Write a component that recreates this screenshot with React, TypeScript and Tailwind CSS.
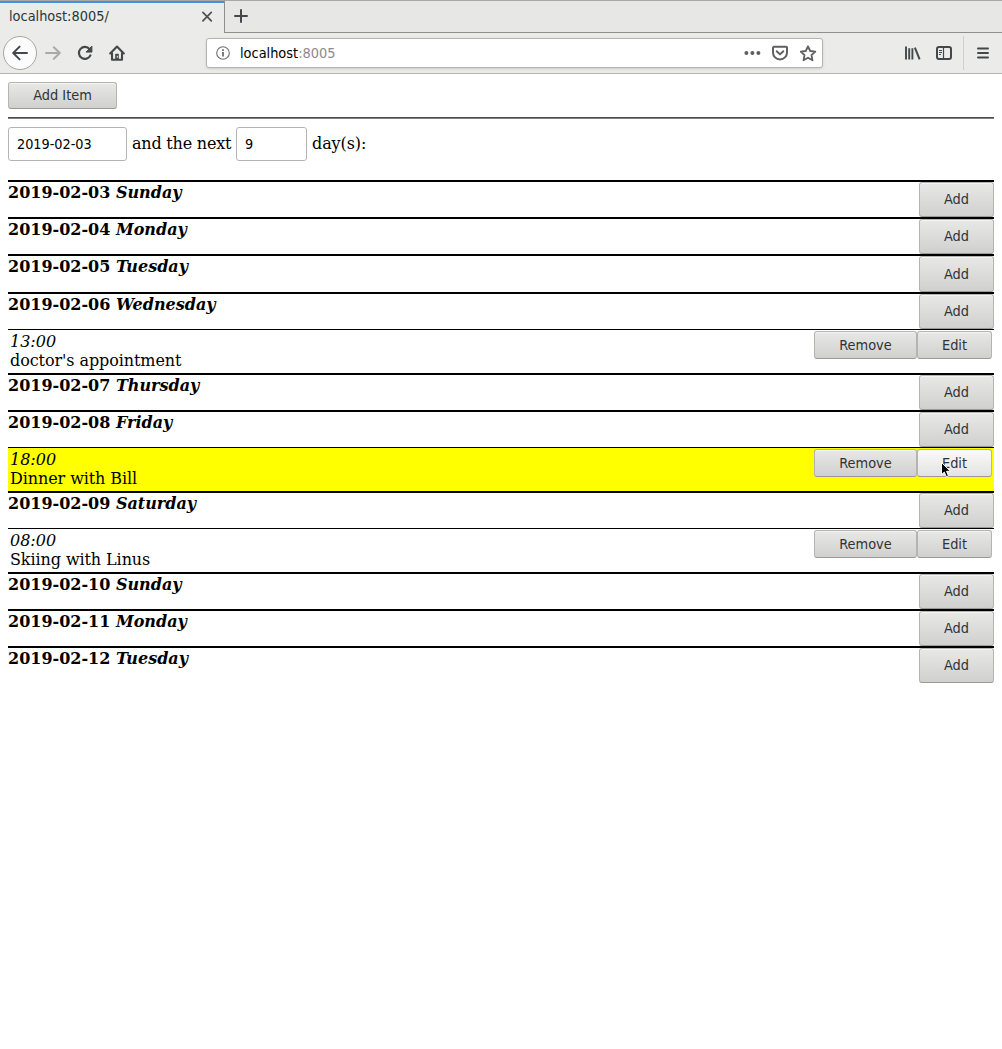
import type { ReactNode } from "react";

const UI_FONT = "font-['DejaVu_Sans_Condensed','DejaVu_Sans',sans-serif]";

type Item = { time: string; text: string; active?: boolean };
type Day = { date: string; name: string; height: string; items?: Item[] };

const days: Day[] = [
  { date: "2019-02-03", name: "Sunday", height: "h-[37px]" },
  { date: "2019-02-04", name: "Monday", height: "h-[37px]" },
  { date: "2019-02-05", name: "Tuesday", height: "h-[38px]" },
  { date: "2019-02-06", name: "Wednesday", height: "h-[37px]", items: [{ time: "13:00", text: "doctor's appointment" }] },
  { date: "2019-02-07", name: "Thursday", height: "h-[37px]" },
  { date: "2019-02-08", name: "Friday", height: "h-[37px]", items: [{ time: "18:00", text: "Dinner with Bill", active: true }] },
  { date: "2019-02-09", name: "Saturday", height: "h-[37px]", items: [{ time: "08:00", text: "Skiing with Linus" }] },
  { date: "2019-02-10", name: "Sunday", height: "h-[37px]" },
  { date: "2019-02-11", name: "Monday", height: "h-[37px]" },
  { date: "2019-02-12", name: "Tuesday", height: "h-[37px]" },
];

function Button({ size, hover, children }: { size: string; hover?: boolean; children: ReactNode }) {
  const fill = hover ? "from-[#fafafa] to-[#e3e3e2]" : "from-[#e8e8e7] to-[#d0d0ce]";
  return (
    <button
      className={`${UI_FONT} ${size} ${fill} flex shrink-0 items-center justify-center rounded-[3px] border border-[#b4b4b0] border-b-[#9a9a96] bg-linear-to-b text-[14.4px] leading-none text-[#2e3436] shadow-[inset_0_1px_0_#f4f4f3]`}
    >
      {children}
    </button>
  );
}

function Pointer() {
  return (
    <svg className="absolute top-[13px] left-[24px]" width="10" height="16" viewBox="0 0 10 16">
      <path d="M.5.5v12.2l2.8-2.6 2 4.600 2.200-.9-2-4.500h3.900z" fill="#000" stroke="#fff" strokeWidth="1" />
    </svg>
  );
}

function TabBar() {
  return (
    <div className="flex h-[33px]">
      <div className="flex w-[225px] items-center justify-between border-t border-r border-t-[#a9a9a5] border-r-[#8f8f8b] pr-[11px] pl-[9px] shadow-[inset_0_2px_0_#4a90d9]">
        <span className="pb-px text-[14.4px]">localhost:8005/</span>
        <svg width="12" height="12" viewBox="0 0 12 12" stroke="#4c5254" strokeWidth="1.7" strokeLinecap="round">
          <path d="M1.9 1.4l8.4 8.4M10.3 1.4l-8.4 8.4" />
        </svg>
      </div>
      <div className="flex flex-1 items-center border-t border-b border-t-[#a9a9a5] border-b-[#8f8f8b] bg-[#e7e7e5] pb-px pl-[8px]">
        <svg width="16" height="16" viewBox="0 0 16 16" stroke="#43494b" strokeWidth="2" strokeLinecap="round">
          <path d="M8 2v12M2 8h12" />
        </svg>
      </div>
    </div>
  );
}

function Toolbar() {
  return (
    <div className="flex h-[41px] items-center border-b border-[#b4b4b0] pl-[3px]">
      <div className="flex size-[34px] items-center justify-center rounded-full border border-[#a6a6a2] bg-[#fcfcfc]">
        <svg width="18" height="18" viewBox="0 0 18 18" fill="none" stroke="#43494b" strokeWidth="2" strokeLinecap="round" strokeLinejoin="round">
          <path d="M16 9H2.4M8.6 2.6L2.200 9l6.400 6.400" />
        </svg>
      </div>
      <svg className="ml-[7px]" width="18" height="18" viewBox="0 0 18 18" fill="none" stroke="#a8aaa9" strokeWidth="2" strokeLinecap="round" strokeLinejoin="round">
        <path d="M2 9h13.6M9.8 3.2L15.8 9l-6 5.8" />
      </svg>
      <svg className="ml-[15px]" width="16" height="16" viewBox="0 0 16 16" fill="none" stroke="#43494b" strokeWidth="2.2" strokeLinecap="round" strokeLinejoin="round">
        <path d="M13.4 10.4A6 6 0 1 1 12.6 4.1" />
        <path d="M14.9 1.500v5.600H9.400z" fill="#43494b" strokeWidth="1" />
      </svg>
      <svg className="ml-[16px]" width="16" height="16" viewBox="0 0 16 16" fill="none" stroke="#43494b" strokeWidth="2.1" strokeLinecap="round" strokeLinejoin="round">
        <path d="M1.200 8.400L8 1.500l6.800 6.900" />
        <path d="M3 8v6.800h10V8" />
        <path d="M6.200 15V9.500a.8.8 0 0 1 .8-.8h2a.8.8 0 0 1 .8.8V15z" fill="#43494b" stroke="none" />
        <path d="M8.300 11.200v1.200" stroke="#ebebe9" strokeWidth="1" />
      </svg>
      <div className="ml-[81px] flex h-[30px] w-[617px] items-center rounded-[3px] border border-[#b4b4b0] bg-white pr-[5px] pl-[9px] shadow-sm">
        <svg width="14" height="14" viewBox="0 0 14 14" fill="none" stroke="#6e6e6e" strokeWidth="1.1">
          <circle cx="7" cy="7" r="6.3" />
          <path d="M7 6v4.6M7 3.2v1.8" strokeWidth="1.8" />
        </svg>
        <span className="ml-[10px] flex-1 text-[14.4px] text-[#8b8b8b]">
          <span className="text-black">localhost</span>:8005
        </span>
        <svg width="17" height="16" viewBox="0 0 17 16" fill="#5f5f5f">
          <circle cx="2.4" cy="8" r="2" />
          <circle cx="8.4" cy="8" r="2" />
          <circle cx="14.4" cy="8" r="2" />
        </svg>
        <svg className="ml-[11px]" width="17" height="16" viewBox="0 0 17 16" fill="none" stroke="#5f5f5f" strokeWidth="2" strokeLinecap="round" strokeLinejoin="round">
          <path d="M2 1.800h12a1 1 0 0 1 1 1v4.600a7 7 0 0 1-14 0V2.800a1 1 0 0 1 1-1z" />
          <path d="M4.700 6.200L8 9.400l3.300-3.200" />
        </svg>
        <svg className="ml-[11px]" width="17" height="17" viewBox="0 0 17 17" fill="none" stroke="#5f5f5f" strokeWidth="1.8" strokeLinejoin="round">
          <path d="M8 1.300l2.200 4.700 5.100.6-3.800 3.500 1 5.200L8 12.700l-4.500 2.600 1-5.200L.7 6.600l5.100-.6z" />
        </svg>
      </div>
      <svg className="ml-[82px]" width="16" height="16" viewBox="0 0 16 16" fill="none" stroke="#43494b">
        <path d="M1 1.500v13M4.200 3.200v11.300M7.400 3.200v11.300" strokeWidth="1.9" />
        <path d="M9.900 2.600l4.700 11.700" strokeWidth="2" />
      </svg>
      <svg className="ml-[15px]" width="16" height="14" viewBox="0 0 16 14" fill="none" stroke="#43494b" strokeWidth="2">
        <rect x="1" y="1" width="14" height="12" rx="2" />
        <path d="M7.500 1v12" strokeWidth="1.2" />
        <path d="M3 4.500h3M3 6.500h3M3 8.500h2" strokeWidth="1" />
      </svg>
      <div className="ml-[11px] h-[34px] w-px bg-[#cfcfcc]" />
      <svg className="ml-[13px]" width="12" height="14" viewBox="0 0 12 14" stroke="#43494b" strokeWidth="2" strokeLinecap="round">
        <path d="M1 2.500h10M1 7h10M1 11.500h10" />
      </svg>
    </div>
  );
}

function DayRow({ day }: { day: Day }) {
  return (
    <>
      <div className={`flex justify-between border-t-2 border-black ${day.height}`}>
        <h2 className="pt-px font-bold">
          {day.date} <em>{day.name}</em>
        </h2>
        <Button size="h-full w-[75px]">Add</Button>
      </div>
      {day.items?.map((item) => (
        <div
          key={item.time}
          className={`flex h-[44px] items-start justify-between border-t border-black px-[2px] ${item.active ? "bg-[#ffff00]" : ""}`}
        >
          <div className="pt-[2px]">
            <em className="block">{item.time}</em>
            <span className="tracking-[-0.09px]">{item.text}</span>
          </div>
          <div className="flex pt-px">
            <Button size="h-[28px] w-[103px]">Remove</Button>
            <div className="relative">
              <Button size="h-[28px] w-[75px]" hover={item.active}>
                Edit
              </Button>
              {item.active && <Pointer />}
            </div>
          </div>
        </div>
      ))}
    </>
  );
}

export default function App() {
  return (
    <div className="min-h-screen bg-white font-['DejaVu_Serif',serif] text-[16px] leading-[19px] text-black">
      <header className={`${UI_FONT} bg-[#ebebe9] text-[#2e3436]`}>
        <TabBar />
        <Toolbar />
      </header>
      <main className="px-[8px] pt-[8px]">
        <Button size="h-[27px] w-[109px]">Add Item</Button>
        <div className="mt-[8px] h-[2px] border-t border-b border-t-[#4c4c4c] border-b-[#808080]" />
        <div className="mt-[8px] flex h-[34px] items-center">
          <input
            readOnly
            value="2019-02-03"
            className="h-[34px] w-[119px] rounded-[3px] border border-[#b4b4b0] bg-white px-[8px] font-['DejaVu_Sans_Condensed','DejaVu_Sans',sans-serif] text-[14.3px]"
          />
          <span className="mx-[5px] w-[99px] pb-[2px] tracking-[-0.2px] whitespace-nowrap">and the next</span>
          <input
            readOnly
            value="9"
            className="h-[34px] w-[71px] rounded-[3px] border border-[#b4b4b0] bg-white px-[8px] font-['DejaVu_Sans_Condensed','DejaVu_Sans',sans-serif] text-[14.3px]"
          />
          <span className="ml-[5px] pb-[2px] tracking-[-0.1px]">day(s):</span>
        </div>
        <section className="mt-[19px]">
          {days.map((day) => (
            <DayRow key={day.date} day={day} />
          ))}
        </section>
      </main>
    </div>
  );
}
